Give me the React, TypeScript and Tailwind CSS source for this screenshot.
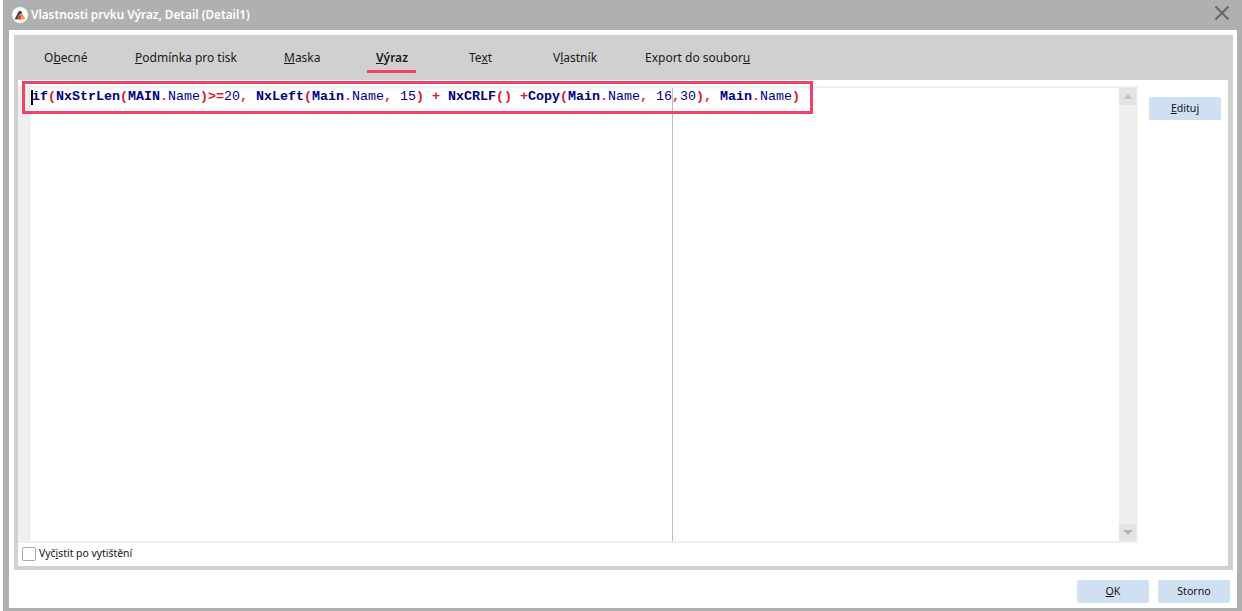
const tabs = [
  { pre: "O", key: "b", post: "ecné", width: "w-[91px]" },
  { pre: "", key: "P", post: "odmínka pro tisk", width: "w-[149px]" },
  { pre: "", key: "M", post: "aska", width: "w-[92px]" },
  { pre: "", key: "V", post: "ýraz", width: "w-[93px]", active: true },
  { pre: "Te", key: "x", post: "t", width: "w-[84px]" },
  { pre: "V", key: "l", post: "astník", width: "w-[92px]" },
  { pre: "Export do soubor", key: "u", post: "", width: "w-[105px]" },
];

function Name({ first }: { first: string }) {
  return (
    <>
      <b>{first}</b>
      <b className="text-[#e8102a]">.</b>
      <span className="text-[#000080]">Name</span>
    </>
  );
}

function Red({ children }: { children: string }) {
  return <b className="text-[#e8102a]">{children}</b>;
}

function Btn({ pre = "", k = "", post = "" }) {
  return (
    <button className="block h-[23px] w-[72px] rounded-[2px] bg-[#cfe0f3] pt-[1px] text-[10.6px] text-[#111]">
      {pre}
      <u>{k}</u>
      {post}
    </button>
  );
}

export default function App() {
  return (
    <div className="h-[611px] w-[1242px] overflow-hidden bg-white pl-[3px] font-['Noto_Sans',sans-serif]">
      <div className="flex h-full flex-col bg-[#b0b0b0] pb-[3px] pl-[6px] pr-[5px]">
        {/* title bar */}
        <div className="flex h-[30px] shrink-0 items-center">
          <div className="ml-[3px] flex h-4 w-4 items-center justify-center rounded-full bg-white">
            <svg width="12" height="10" viewBox="0 0 12 10">
              <path d="M0.5 9.5 L4.5 1.5 Q6 0 7.5 1.5 L8.5 3.5 Q5.5 3 3.5 9.5 Z" fill="#4a4a4a" />
              <path d="M3.5 9.5 Q5.5 4 8 4.5 L7 9.5 Z" fill="#e2402a" />
              <path d="M7 9.5 L8 4.5 L8.6 3.7 L11.5 9.5 Z" fill="#f5a623" />
            </svg>
          </div>
          <span className="ml-[3px] text-[11.75px] font-semibold text-white">Vlastnosti prvku Výraz, Detail (Detail1)</span>
          <svg className="mb-[4px] ml-auto mr-[7px]" width="16" height="16" viewBox="0 0 16 16">
            <path d="M1.5 1.5 L14.5 14.5 M14.5 1.5 L1.5 14.5" stroke="#666" strokeWidth="2" fill="none" />
          </svg>
        </div>

        {/* dialog body */}
        <div className="flex min-h-0 flex-1 flex-col bg-white pb-[5px] pl-[5px] pr-[4px] pt-[5px]">
          <div className="flex h-[535px] shrink-0 flex-col bg-[#d0d0d0] pb-[4px] pr-[5px]">
            {/* tabs */}
            <div className="flex h-[45px] shrink-0 pl-[30px] text-[12px] text-[#1a1a1a]">
              {tabs.map((t) => (
                <div key={t.post + t.pre} className={`${t.width} shrink-0 pt-[14px]`}>
                  <span className={`whitespace-nowrap ${t.active ? "font-semibold" : ""}`}>
                    {t.pre}
                    <u>{t.key}</u>
                    {t.post}
                  </span>
                </div>
              ))}
            </div>

            {/* white content */}
            <div className="ml-[4px] flex min-h-0 flex-1 flex-col bg-white pt-[6px]">
              <div className="flex h-[457px] shrink-0">
                <div className="w-[11px] shrink-0 bg-[#efefef]" />
                <div className="relative w-[1090px] shrink-0 border-b-[2px] border-l border-t-[2px] border-[#efefef] border-l-[#e4e4e4] bg-white">
                  <div className="absolute bottom-0 left-[642px] top-0 w-px bg-[#bdbdbd]" />
                  <div className="relative flex h-[17px] items-center whitespace-pre pl-[1px] pt-[1px] font-['Liberation_Mono',monospace] text-[13.33px] text-[#000080]">
                    <span className="mr-[-1px] h-[15px] w-[2px] bg-black" />
                    <b>if</b>
                    <Red>(</Red>
                    <b>NxStrLen</b>
                    <Red>(</Red>
                    <Name first="MAIN" />
                    <Red>{")>="}</Red>
                    <span>20</span>
                    <Red>, </Red>
                    <b>NxLeft</b>
                    <Red>(</Red>
                    <Name first="Main" />
                    <Red>, </Red>
                    <span>15</span>
                    <Red>{") + "}</Red>
                    <b>NxCRLF</b>
                    <Red>{"() +"}</Red>
                    <b>Copy</b>
                    <Red>(</Red>
                    <Name first="Main" />
                    <Red>, </Red>
                    <span>16</span>
                    <Red>,</Red>
                    <span>30</span>
                    <Red>{"), "}</Red>
                    <Name first="Main" />
                    <Red>)</Red>
                  </div>
                </div>
                {/* scrollbar */}
                <div className="flex w-[19px] shrink-0 flex-col justify-between bg-[#efefef] py-[2px]">
                  <div className="flex h-[17px] w-[17px] items-center justify-center bg-[#e4e4e4]">
                    <div className="h-0 w-0 border-x-[5px] border-b-[5px] border-x-transparent border-b-[#c4c4c4]" />
                  </div>
                  <div className="flex h-[17px] w-[17px] items-center justify-center bg-[#e4e4e4]">
                    <div className="h-0 w-0 border-x-[5px] border-t-[5px] border-x-transparent border-t-[#b4b4b4]" />
                  </div>
                </div>
                <div className="ml-[11px] pt-[11px]">
                  <Btn k="E" post="dituj" />
                </div>
              </div>

              {/* checkbox */}
              <div className="flex items-center pl-[4px] pt-[3px]">
                <div className="h-[14px] w-[14px] rounded-[2px] border border-[#aaa] bg-white" />
                <span className="ml-[3px] text-[10.4px] text-[#111]">
                  Vyč<u>i</u>stit po vytištění
                </span>
              </div>
            </div>
          </div>

          <div className="mt-auto flex justify-end gap-[9px] pr-[3px]">
            <Btn k="O" post="K" />
            <Btn pre="Storno" />
          </div>
        </div>
      </div>

      {/* highlight over the expression */}
      <div className="absolute left-[22px] top-[81px] h-[33px] w-[791px] border-[3px] border-[#ee4268]" />
      {/* active tab underline */}
      <div className="absolute left-[367px] top-[70px] h-[3px] w-[49px] bg-[#ee4268]" />
    </div>
  );
}
